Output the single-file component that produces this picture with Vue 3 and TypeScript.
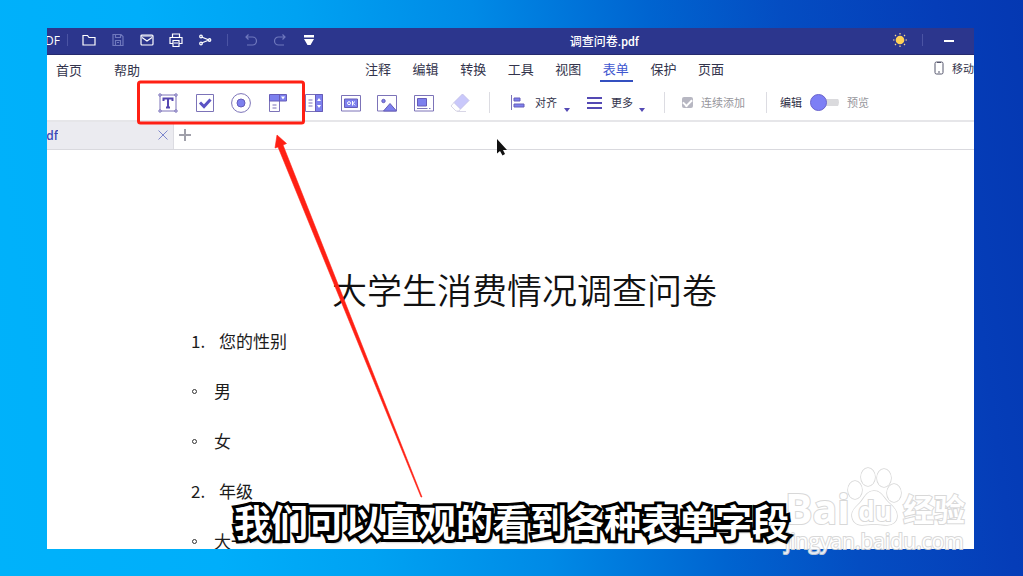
<script setup lang="ts">
import { ref } from 'vue'

const menus: string[] = ['注释', '编辑', '转换', '工具', '视图', '表单', '保护', '页面']
const activeMenu = ref('表单')
const continuous = ref(true)
const preview = ref(false)

interface Line {
  kind: 'question' | 'option'
  mark: string
  text: string
}

const lines: Line[] = [
  { kind: 'question', mark: '1.', text: '您的性别' },
  { kind: 'option', mark: '', text: '男' },
  { kind: 'option', mark: '', text: '女' },
  { kind: 'question', mark: '2.', text: '年级' },
  { kind: 'option', mark: '', text: '大一' },
]
</script>

<template>
  <div class="desktop">
    <main class="window">
      <header class="titlebar">
        <div class="title-left">
          <span class="brand">DF</span>
          <i class="bar-sep"></i>
          <div class="quick">
            <button type="button" aria-label="打开">
              <svg viewBox="0 0 14 14"><path d="M1 2.500h4.500l1.500 2h6v7.500h-12z" /></svg>
            </button>
            <button type="button" class="dim" aria-label="保存">
              <svg viewBox="0 0 14 14"><path d="M2 1.500h8l2 2v9h-10zM4.500 1.500v3h5v-3M4.500 12.500v-5h5v5M6 9.500h2" /></svg>
            </button>
            <button type="button" aria-label="邮件">
              <svg viewBox="0 0 14 14"><rect x="1" y="2" width="12" height="10" rx="1" /><path d="M2 4.500l5 3.500 5-3.500M1 3h12" /></svg>
            </button>
            <button type="button" aria-label="打印">
              <svg viewBox="0 0 14 14"><path d="M3.500 4.500v-3.500h7v3.500M3.500 10.500h-2.500v-6h12v6h-2.500M4 7.500h6v6h-6zM5 10h4" /></svg>
            </button>
            <button type="button" aria-label="分享">
              <svg viewBox="0 0 14 14"><path d="M3.500 4l7.500 3-7.500 3" /><circle cx="3" cy="3.500" r="1.300" /><circle cx="11.500" cy="7" r="1.300" /><circle cx="3" cy="10.500" r="1.300" /></svg>
            </button>
          </div>
          <i class="bar-sep mid"></i>
          <div class="quick">
            <button type="button" class="dim" aria-label="撤销">
              <svg viewBox="0 0 14 14"><path d="M4.500 1.500L2 4l2.500 2.500M2 4h6.500a4 4 0 0 1 0 8H3" /></svg>
            </button>
            <button type="button" class="dim" aria-label="重做">
              <svg viewBox="0 0 14 14"><path d="M9.500 1.500L12 4l-2.500 2.500M12 4H5.500a4 4 0 0 0 0 8H11" /></svg>
            </button>
            <button type="button" aria-label="更多工具">
              <svg viewBox="0 0 14 14"><path class="solid" d="M2 2h10v2.500H2zM2 6h10l-3.500 6h-3z" /></svg>
            </button>
          </div>
        </div>
        <span class="file">调查问卷.pdf</span>
        <div class="title-right">
          <button type="button" aria-label="主题">
            <svg viewBox="0 0 14 14"><circle class="sun" cx="7" cy="7" r="4.300" /><path class="ray" d="M7 0v1.500M7 12.500V14M0 7h1.500M12.500 7H14M2 2l1 1M11 11l1 1M12 2l-1 1M3 11l-1 1" /></svg>
          </button>
          <i class="bar-sep"></i>
          <button type="button" class="minimize" aria-label="最小化">
            <svg viewBox="0 0 10 14"><path class="thick" d="M0 8h10" /></svg>
          </button>
        </div>
      </header>

      <nav class="menu">
        <div class="menu-left">
          <button type="button">首页</button>
          <button type="button">帮助</button>
        </div>
        <div class="menu-main">
          <button
            v-for="m in menus"
            :key="m"
            type="button"
            :class="{ active: m === activeMenu }"
            @click="activeMenu = m"
          >{{ m }}</button>
        </div>
        <button type="button" class="mobile">
          <svg viewBox="0 0 10 14"><rect x="1" y="1" width="8" height="12" rx="1.500" /><path d="M3 1.500h4M4 11h2" /></svg>
          <span>移动</span>
        </button>
      </nav>

      <section class="toolbar">
        <div class="fields">
          <button type="button" aria-label="文本域">
            <svg viewBox="0 0 20 20">
              <path class="ln" d="M2 2h16v16H2z" />
              <g class="knob"><circle cx="2" cy="2" r="1.200" /><circle cx="18" cy="2" r="1.200" /><circle cx="2" cy="18" r="1.200" /><circle cx="18" cy="18" r="1.200" /></g>
              <path class="tee" d="M5.500 8V5.500h9V8M10 5.500v9M8 14.500h4" />
            </svg>
          </button>
          <button type="button" aria-label="复选框">
            <svg viewBox="0 0 20 20"><path class="ln" d="M1.500 1.500h17v17h-17z" /><path class="tick" d="M5 9.500l4 4 6.500-7" /></svg>
          </button>
          <button type="button" aria-label="单选按钮">
            <svg viewBox="0 0 20 20"><circle class="ln" cx="10" cy="10" r="9.400" /><circle class="fl edge" cx="10" cy="10" r="4" /></svg>
          </button>
          <button type="button" aria-label="组合框">
            <svg viewBox="0 0 20 20"><path class="ln" d="M1.500 8v10.500h10V8M4.500 12h4M4.500 15h4" /><path class="fl edge" d="M1.500 1.500h17v6.500h-17zM11.500 1.500V8" /><path class="wh" d="M13 3.500h4l-2 3z" /></svg>
          </button>
          <button type="button" aria-label="列表框">
            <svg viewBox="0 0 20 20"><path class="ln" d="M1.500 1.500h17v17h-17zM4.500 7h4M4.500 10h4M4.500 13h4" /><path class="fl edge" d="M11.500 1.500h7v17h-7z" /><path class="wh" d="M13 8h4l-2-3zM13 12h4l-2 3z" /></svg>
          </button>
          <button type="button" aria-label="按钮">
            <svg viewBox="0 0 20 20"><path class="ln" d="M.5 2.500h19v15.500H.5z" /><path class="fl edge" d="M3.500 6h13v8.500h-13z" /><circle class="wl" cx="8" cy="10.200" r="1.500" /><path class="wl" d="M11.500 8v4.500M14 8.500l-2 1.800 2 2" /></svg>
          </button>
          <button type="button" aria-label="图片">
            <svg viewBox="0 0 20 20"><path class="ln" d="M.5 2.500h19v15.500H.5z" /><circle class="fl edge" cx="6.500" cy="8" r="1.700" /><path class="fl edge" d="M6.500 18l6.500-7.500 6.500 7.500z" /></svg>
          </button>
          <button type="button" aria-label="签名">
            <svg viewBox="0 0 20 20"><path class="ln" d="M.5 2.500h19v15.500H.5zM3 15.500h10.500M15 15.500h1.500" /><path class="fl edge" d="M3.500 5.500h9v7.500h-9z" /></svg>
          </button>
          <button type="button" aria-label="橡皮擦">
            <svg viewBox="0 0 20 20"><path class="rub" d="M12.500 1l6.500 6.500-8.500 8.500-6.500-6.500z" /><path class="rub-tip" d="M4 9.500l-3 3.500 5 5h3l1.500-2M7 18.500h9" /></svg>
          </button>
        </div>
        <i class="sep after-fields"></i>
        <button type="button" class="drop align">
          <svg class="align-icon" viewBox="0 0 14 15"><path class="ln" d="M.5 0v15" /><path class="fl edge" d="M3 3h6v3H3zM3 9h10v3H3z" /></svg>
          <span>对齐</span><i class="caret"></i>
        </button>
        <button type="button" class="drop more">
          <svg class="more-icon" viewBox="0 0 15 14"><path class="heavy" d="M0 2h15M0 7h15M0 12h15" /></svg>
          <span>更多</span><i class="caret"></i>
        </button>
        <i class="sep"></i>
        <label class="keep">
          <input v-model="continuous" type="checkbox" />
          <span>连续添加</span>
        </label>
        <i class="sep"></i>
        <label class="mode">
          <span class="on">编辑</span>
          <input v-model="preview" type="checkbox" />
          <span>预览</span>
        </label>
      </section>

      <div class="tabs">
        <div class="tab">
          <span class="tab-name">df</span>
          <button type="button" aria-label="关闭">
            <svg viewBox="0 0 10 10"><path d="M.5.5l9 9M9.500.5l-9 9" /></svg>
          </button>
        </div>
        <button type="button" class="add" aria-label="新建">
          <svg viewBox="0 0 12 12"><path d="M0 6h12M6 0v12" /></svg>
        </button>
      </div>

      <article class="doc">
        <h1>大学生消费情况调查问卷</h1>
        <p v-for="(l, i) in lines" :key="i" :class="l.kind">
          <span class="mark">{{ l.mark }}</span><span>{{ l.text }}</span>
        </p>
      </article>
    </main>

    <div class="watermark">
      <div class="wm-top">
        <span class="wm-bai">Bai</span>
        <span class="wm-paw">
          <svg viewBox="0 0 56 62">
            <ellipse cx="8" cy="25" rx="7" ry="9" />
            <ellipse cx="21" cy="12" rx="7" ry="9" />
            <ellipse cx="37" cy="13" rx="7" ry="9" />
            <ellipse cx="47" cy="28" rx="7" ry="9" />
            <path d="M27 26c8 0 10 8 15 12s8 8 8 13c0 6-5 9-10 9-5 0-8-1-13-1s-8 1-12 1c-6 0-10-4-10-10 0-5 4-8 8-12s6-12 14-12z" />
          </svg>
          <b>du</b>
        </span>
        <span class="wm-cn">经验</span>
      </div>
      <div class="wm-url">jingyan.baidu.com</div>
    </div>

    <svg class="marks" viewBox="0 0 1023 576" aria-hidden="true">
      <rect x="138.500" y="82" width="165" height="41" rx="2" />
      <path class="red" d="M277 135l9.500 8.500-3.500 1.500L422 497h-1L278 147l-3 1z" />
      <path class="pointer" d="M497 139v14.500l3-2.500 2.500 4.500 2.500-1.500-2-4h4z" />
    </svg>
    <p class="caption">我们可以直观的看到各种表单字段</p>
  </div>
</template>

<style>
body {
  margin: 0;
}
</style>

<style scoped>
* {
  box-sizing: border-box;
}
.desktop {
  position: relative;
  display: flex;
  min-height: 100vh;
  padding: 28px 49px 27px 47px;
  overflow: hidden;
  font-family: "Open Sans", "Noto Sans CJK SC", sans-serif;
  background: linear-gradient(82deg, #00b2fa 0%, #00aefa 20%, #00a2f2 34%, #008ae6 50%, #0064d0 66%, #044dc2 78%, #053db8 92%, #0538b2 100%);
}
button {
  display: flex;
  align-items: center;
  padding: 0;
  border: 0;
  background: none;
  color: inherit;
  font: inherit;
  white-space: nowrap;
}
svg {
  display: block;
  flex: none;
  fill: none;
}
.window {
  display: flex;
  flex: 1;
  flex-direction: column;
  min-width: 0;
  height: calc(100vh - 55px);
  overflow: hidden;
  background: #fff;
  color: #33344c;
}

.titlebar {
  display: flex;
  flex: none;
  align-items: center;
  height: 27px;
  padding-bottom: 2px;
  border-bottom: 1px solid #252a6e;
  background: #2c368d;
  color: #fff;
  font-size: 12px;
}
.title-left {
  display: flex;
  align-items: center;
  width: 56.4%;
}
.brand {
  display: flex;
  justify-content: flex-end;
  width: 13px;
  overflow: hidden;
}
.bar-sep {
  width: 1px;
  height: 12px;
  margin: 0 14px;
  background: #4b54a4;
}
.brand + .bar-sep {
  margin-left: 7px;
}
.bar-sep.mid {
  margin: 0 16px 0 15px;
}
.quick {
  display: flex;
  gap: 15px;
}
.titlebar svg {
  width: 14px;
  height: 14px;
  stroke: #fff;
  stroke-width: 1.2;
}
.titlebar .dim svg {
  stroke: #6f78bd;
}
.titlebar .solid {
  fill: #fff;
  stroke: none;
}
.file {
  font-family: Roboto, "Noto Sans CJK SC", sans-serif;
  font-weight: 500;
}
.title-right {
  display: flex;
  align-items: center;
  margin-left: auto;
  padding-right: 20px;
}
.title-right .bar-sep {
  margin: 0 21px 0 15px;
}
.titlebar .minimize svg {
  width: 10px;
}
.titlebar .sun {
  fill: #ffd257;
  stroke: none;
}
.titlebar .ray {
  stroke: #f0d694;
}
.thick {
  stroke-width: 2;
}

.menu {
  display: flex;
  flex: none;
  height: 30px;
  font-size: 13px;
}
.menu-left {
  display: flex;
  gap: 32px;
  width: 318px;
  height: 28px;
  padding-left: 9px;
}
.menu-main {
  display: flex;
  justify-content: space-between;
  width: 359px;
  height: 27px;
}
.menu-main button {
  position: relative;
}
.menu-main .active {
  color: #4058d0;
}
.menu-main .active::after {
  position: absolute;
  right: -4px;
  bottom: 0;
  left: -3px;
  height: 2px;
  background: #3450c0;
  content: "";
}
.mobile {
  gap: 8px;
  width: 40px;
  height: 26px;
  margin-left: auto;
  overflow: hidden;
  font-size: 11px;
}
.mobile svg {
  width: 10px;
  height: 14px;
  stroke: #55566c;
}

.toolbar {
  display: flex;
  flex: none;
  align-items: center;
  height: 37px;
  padding-left: 111px;
  border-bottom: 2px solid #e6e6e9;
  font-size: 11px;
  line-height: 14px;
}
.fields {
  display: flex;
  justify-content: space-between;
  width: 312px;
}
.fields svg {
  width: 20px;
  height: 20px;
}
.ln {
  stroke: #7c73b8;
}
.knob {
  fill: #fff;
  stroke: #6c62b4;
}
.tee {
  stroke: #5546b0;
  stroke-width: 2;
}
.tick {
  stroke: #5b53c4;
  stroke-width: 3;
}
.fl {
  fill: #7d80ee;
}
.edge {
  stroke: #665cb8;
}
.wh {
  fill: #fff;
}
.wl {
  stroke: #fff;
}
.rub {
  fill: #c9c8fb;
  stroke: #c4c1ea;
}
.rub-tip {
  stroke: #d8d6e6;
}
.sep {
  width: 1px;
  height: 21px;
  background: #dcdce2;
}
.after-fields {
  margin: 0 21px 0 19px;
}
.drop {
  position: relative;
}
.align {
  gap: 10px;
  width: 76px;
}
.more {
  gap: 9px;
  width: 77px;
}
.align-icon {
  width: 14px;
  height: 15px;
}
.more-icon {
  width: 15px;
  height: 14px;
}
.heavy {
  stroke: #5449b4;
  stroke-width: 2;
}
.caret {
  align-self: flex-end;
  margin-left: -3px;
  border: 3px solid transparent;
  border-top: 4px solid #5449b4;
  border-bottom: 0;
  transform: translateY(2px);
}
.keep {
  display: flex;
  align-items: center;
  gap: 8px;
  width: 101px;
  padding-left: 17px;
  color: #96969c;
}
.keep input {
  display: grid;
  place-items: center;
  width: 11px;
  height: 11px;
  margin: 0;
  border-radius: 2px;
  background: #b7b7c2;
  appearance: none;
}
.keep input:checked::before {
  width: 7px;
  height: 4px;
  border: solid #fff;
  border-width: 0 0 2px 2px;
  transform: translateY(-1px) rotate(-45deg);
  content: "";
}
.mode {
  display: flex;
  align-items: center;
  gap: 8px;
  padding-left: 13px;
  color: #96969c;
}
.mode .on {
  color: #2c2d44;
}
.mode input {
  display: flex;
  align-items: center;
  width: 29px;
  height: 15px;
  margin: 0;
  border-radius: 8px;
  background: linear-gradient(#dadadd, #dadadd) right / 27px 7px no-repeat;
  appearance: none;
}
.mode input::before {
  width: 15px;
  height: 15px;
  border: 1px solid #6a64cc;
  border-radius: 50%;
  background: #7d7ff5;
  content: "";
}
.mode input:checked {
  justify-content: flex-end;
}

.tabs {
  display: flex;
  flex: none;
  height: 28px;
  border-bottom: 1px solid #d9d9de;
}
.tab {
  display: flex;
  align-items: center;
  justify-content: space-between;
  width: 127px;
  padding-right: 5px;
  border-right: 1px solid #dcdce2;
  background: #ebebf0;
  color: #3a49b8;
  font-size: 12px;
  font-weight: 600;
}
.tab-name {
  display: flex;
  justify-content: flex-end;
  width: 11px;
  overflow: hidden;
}
.tabs button {
  padding-bottom: 1px;
}
.tab svg {
  width: 10px;
  height: 10px;
  stroke: #7c86cc;
}
.add {
  padding-left: 5px;
}
.add svg {
  width: 12px;
  height: 12px;
  stroke: #a0a0aa;
  stroke-width: 2;
}

.doc {
  padding: 113px 0 0 144px;
  color: #1c1c1c;
  font-family: "Noto Sans CJK SC", sans-serif;
  font-size: 17px;
}
.doc h1 {
  margin: 0 0 2px 141px;
  color: #111;
  font-size: 35px;
  font-weight: 350;
  line-height: 51px;
  white-space: nowrap;
}
.doc p {
  display: flex;
  align-items: center;
  height: 50px;
  margin: 0;
  line-height: 50px;
}
.mark {
  width: 28px;
}
.option .mark {
  width: 5px;
  height: 5px;
  margin: 0 17px 0 1px;
  border: 1px solid #333;
  border-radius: 50%;
}

.marks {
  position: absolute;
  top: 0;
  left: 0;
  width: 1023px;
  height: 576px;
  pointer-events: none;
}
.marks rect {
  stroke: #ff2014;
  stroke-width: 3;
}
.red {
  fill: #ff2014;
  stroke: #ff2014;
  stroke-width: 0.6;
}
.pointer {
  fill: #111;
}
.caption {
  position: absolute;
  right: 0;
  bottom: 28px;
  left: 0;
  margin: 0;
  color: #fff;
  font-family: "Noto Sans CJK SC", sans-serif;
  font-size: 37px;
  font-weight: 700;
  line-height: 54px;
  text-align: center;
  text-shadow: 2px 3px 2px rgba(0, 0, 0, 0.5);
  white-space: nowrap;
  -webkit-text-stroke: 6px #000;
  paint-order: stroke fill;
  stroke-linejoin: round;
}

.watermark {
  position: absolute;
  right: 56px;
  bottom: 21px;
  width: 182px;
  color: #fff;
  opacity: 0.9;
  font-family: "Open Sans", "Noto Sans CJK SC", sans-serif;
  paint-order: stroke fill;
  -webkit-text-stroke: 2px #d4d4d4;
}
.wm-top {
  display: flex;
  align-items: flex-end;
  height: 62px;
}
.wm-bai {
  width: 62px;
  font-size: 41px;
  font-weight: 700;
  line-height: 38px;
}
.wm-paw {
  display: grid;
  justify-items: center;
  align-items: end;
  width: 56px;
}
.wm-paw > * {
  grid-area: 1 / 1;
}
.wm-paw svg {
  width: 56px;
  height: 62px;
  fill: #fff;
  stroke: #d2d2d2;
  stroke-width: 1.5;
}
.wm-paw b {
  font-size: 26px;
  line-height: 32px;
}
.wm-cn {
  font-size: 31px;
  font-weight: 700;
  line-height: 36px;
}
.wm-url {
  font-size: 21px;
  line-height: 28px;
}
</style>
